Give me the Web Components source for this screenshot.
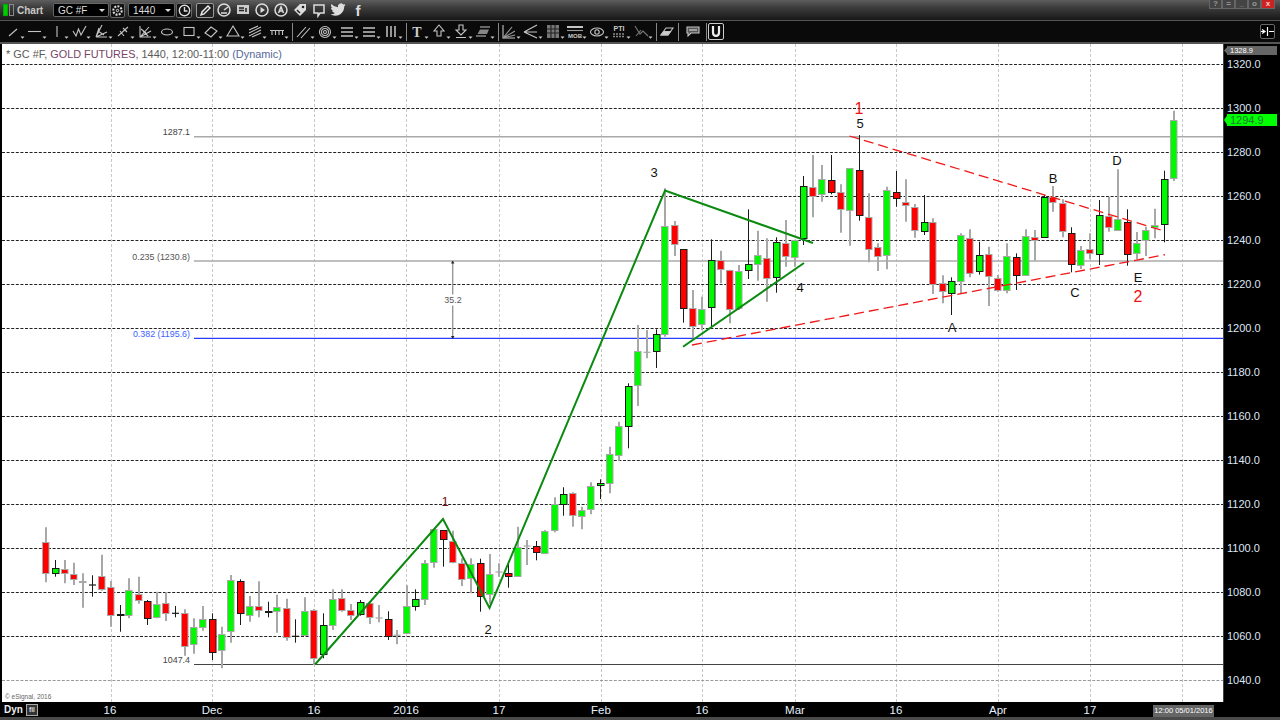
<!DOCTYPE html>
<html>
<head>
<meta charset="utf-8">
<title>Chart</title>
<style>
  html, body { margin: 0; background: #000; overflow: hidden; }
</style>
</head>
<body>
<chart-window></chart-window>
<script>
(function () {
  var SANS = '"Liberation Sans", Arial, sans-serif';

  // --- toolbar glyphs, drawn in a 22x20 box with the icon centred on x=9
  var TOOLS = {
    line: '<path d="M5 14L13 7"/>',
    hline: '<path d="M2 9.5H15"/>',
    vline: '<path d="M9 4V15"/>',
    wave: '<path d="M3 9L6 14L8.5 7L11 13L16 4"/>',
    fib: '<path d="M4 15L10 3M4 15L15 10M4 15H15M4 15L7 6M6 9L12 13"/>',
    cross: '<path d="M4 14L14 5M6 9L10 14M9 6L13 10"/>',
    fan: '<path d="M4 4V15H15M4 15L13 5M4 15L15 9M7 9L12 14M5 7L10 11"/>',
    ellipse: '<ellipse cx="9" cy="10" rx="5.5" ry="3"/>',
    rect: '<rect x="4" y="5.5" width="10" height="8"/>',
    diamond: '<path d="M3 11L9 5L15 9L9 15Z"/>',
    tri: '<path d="M9 4L15 14H3Z"/>',
    channel: '<path d="M3 11L15 5M3 14L15 8M3 8L12 4M6 15L15 11"/>',
    ticks: '<path d="M2 8.5H16M4 8V13M7.5 8V13M11 8V13M14.5 8V13"/>',
    parallel: '<path d="M3 15L12 5M7 16L16 6"/>',
    rings: '<circle cx="9" cy="10" r="5.5"/><circle cx="9" cy="10" r="3.5"/><circle cx="9" cy="10" r="1.5"/>',
    lines: '<path d="M3 6H15M3 10H15M3 14H15" stroke-width="1.5"/>',
    vlines: '<path d="M5 4V15M9 4V15M13 4V15" stroke-width="1.5"/>',
    text: '<text x="9" y="15" text-anchor="middle" font-size="14" font-weight="bold" font-family="Liberation Serif" fill="#ccc" stroke="none">T</text>',
    up: '<path d="M9 3L14 9H11V14H7V9H4Z"/>',
    down: '<path d="M7 3H11V8H14L9 13L4 8H7ZM4 15.5H14"/>',
    skew: '<path d="M6 5H16M2 14H12"/><path d="M6 7.5H15L13 12H3.5Z" fill="#888" stroke="none"/>',
    fanfill: '<path d="M3 3V16H15"/><path d="M3 16L12 5M3 16L15 9M3 16L15 13" stroke="#999"/>',
    arrows: '<path d="M2 10L15 3M2 10H15M2 10L15 16" stroke-width="1.2"/>',
    grid: '<rect x="3" y="3" width="12" height="13" fill="#777" stroke="none"/><path d="M7 3V16M11 3V16M3 7H15M3 11H15" stroke="#222"/>',
    mob: '<path d="M1 5H17" stroke-width="2"/><path d="M1 8.5H17" stroke="#999"/><text x="9" y="15.5" text-anchor="middle" font-size="6" font-weight="bold" font-family="Liberation Sans" fill="#ccc" stroke="none">MOB</text>',
    eye: '<ellipse cx="9" cy="10" rx="6.5" ry="4"/><circle cx="9" cy="10" r="2.2"/>',
    pti: '<text x="9" y="9" text-anchor="middle" font-size="7" font-weight="bold" font-family="Liberation Sans" fill="#ccc" stroke="none">PTI</text><path d="M3 12H15M3 14.5H15" stroke="#888" stroke-dasharray="2 1" stroke-width="1.5"/>',
    zig: '<path d="M3 4L8 12L11 9L16 14M4 14L9 8" stroke="#777"/>',
    eraser: '<path d="M3 13L8 6H15L10 13Z"/><path d="M3 13L5.5 9.5H12.5L10 13Z" fill="#ccc"/>',
    note: '<path d="M3 5H15V11H7L4 14V11H3Z" fill="#555"/><path d="M5 8H13" stroke="#ddd"/>'
  };

  // a toolbar button: icon, plus the little drop-down caret unless "plain"
  class ToolIcon extends HTMLElement {
    connectedCallback() {
      var plain = this.hasAttribute('plain');
      var w = plain ? 18 : 22;
      this.attachShadow({ mode: 'open' }).innerHTML =
        '<style>:host{display:block;width:' + w + 'px;height:20px}svg{display:block}</style>' +
        '<svg width="' + w + '" height="20" viewBox="0 0 ' + w + ' 20" fill="none" stroke="#c4c4c4" stroke-width="1.1">' +
        TOOLS[this.getAttribute('name')] +
        (plain ? '' : '<path d="M16.5 14.5h4l-2 2.2z" fill="#ccc" stroke="none"/>') +
        '</svg>';
    }
  }

  class DrawToolbar extends HTMLElement {
    connectedCallback() {
      var groups = [
        ['line', 'hline', 'vline', 'wave', 'fib', 'cross', 'fan', 'ellipse', 'rect', 'diamond', 'tri', 'channel', 'ticks'],
        ['parallel', 'rings', 'lines', 'lines', 'vlines'],
        ['text', 'up', 'down', 'skew'],
        ['fanfill', 'arrows', 'grid', 'mob', 'eye', 'pti', 'zig']
      ];
      var html = groups.map(function (g) {
        return g.map(function (n) { return '<tool-icon name="' + n + '"></tool-icon>'; }).join('') + '<i class="sep"></i>';
      }).join('');
      this.attachShadow({ mode: 'open' }).innerHTML =
        '<style>' +
        ':host{display:flex;align-items:center;height:21px;padding-left:4px;background:#0a0a0a;border-top:1px solid #555;border-bottom:2px solid #555}' +
        '.sep{display:block;width:1px;height:18px;background:#888;margin:0 1px 0 2px}' +
        '.magnet{width:14px;height:15px;border:1px solid #ccc;border-radius:2px;display:flex;align-items:center;justify-content:center}' +
        '.end{margin-left:auto;margin-right:5px;width:13px;height:13px;border:1px solid #666;border-radius:2px;background:#000;display:flex;align-items:center;justify-content:center}' +
        '</style>' + html +
        '<tool-icon name="eraser" plain></tool-icon><i class="sep"></i>' +
        '<tool-icon name="note" plain style="margin:0 2px 0 4px"></tool-icon><i class="sep" style="margin-right:1px"></i>' +
        '<div class="magnet"><svg width="12" height="13" viewBox="0 0 12 13" fill="none" stroke="#eee" stroke-width="2.2"><path d="M3 1V7.5C3 12 9 12 9 7.5V1"/></svg></div>' +
        '<div class="end"><svg width="13" height="9" viewBox="0 0 13 9" fill="none" stroke="#fff" stroke-width="1.2"><path d="M0 4.5H4M1 2.5L4 4.5L1 6.5M6.5 0V9M8 4.5H13"/></svg></div>';
    }
  }

  // small round / square icons of the top strip
  var TOP_ICONS = [
    '<circle cx="8" cy="8" r="6"/><path d="M8 8L12 5M5 11H11"/>',
    '<rect x="2" y="3" width="12" height="9" fill="#ccc" stroke="none"/><path d="M4 6H9M4 8.5H9M11 6V10" stroke="#222"/>',
    '<circle cx="8" cy="8" r="6"/><path d="M6.5 5L11 8L6.5 11Z" fill="#ddd" stroke="none"/>',
    '<circle cx="8" cy="8" r="6"/><path d="M5.5 11L8 5L10.5 11M6.5 9H9.5"/>',
    '<path d="M2 8L8 2H14V8L8 14Z" fill="#ddd" stroke="none"/><circle cx="11" cy="5" r="1.3" fill="#222" stroke="none"/><path d="M5 8L8 11" stroke="#222"/>',
    '<path d="M3 3H13V11H9L7 14V11H3Z"/>',
    '<path transform="scale(.68) translate(0 -.4)" fill="#ddd" stroke="none" d="M23 4.6c-.8.4-1.7.6-2.6.7.9-.6 1.6-1.4 2-2.5-.9.5-1.9.9-2.9 1.1A4.6 4.6 0 0 0 11.6 8 13 13 0 0 1 2.2 3.2a4.6 4.6 0 0 0 1.4 6.1c-.7 0-1.4-.2-2.1-.6 0 2.2 1.6 4.1 3.7 4.6-.7.2-1.4.2-2.1.1.6 1.9 2.3 3.2 4.3 3.2A9.3 9.3 0 0 1 .6 18.5 13 13 0 0 0 7.7 20.6c8.5 0 13.2-7.1 13.2-13.2v-.6c.9-.7 1.7-1.5 2.1-2.2z"/>'
  ];

  class TitleBar extends HTMLElement {
    connectedCallback() {
      var icons = TOP_ICONS.map(function (p) {
        return '<svg class="ic" width="16" height="16" viewBox="0 0 16 16" fill="none" stroke="#ddd" stroke-width="1.5">' + p + '</svg>';
      }).join('');
      this.attachShadow({ mode: 'open' }).innerHTML =
        '<style>' +
        ':host{display:flex;align-items:center;height:20px;box-sizing:border-box;padding-left:4px;font:bold 10px ' + SANS + ';color:#c8c8c8;background:linear-gradient(#5e5e5e 0,#3e3e3e 35%,#181818 100%)}' +
        '.logo{display:flex;gap:2px;width:10px;margin-right:3px}.logo i{display:block;width:3px;height:10px;border:1px solid #888;margin-left:-1px}.logo i:first-child{background:#0c0;border-color:#0a0}' +
        '.name{width:36px}' +
        '.box{height:14px;background:#000;border:1px solid #666;border-radius:2px;display:flex;align-items:center;justify-content:space-between;padding:0 3px 0 4px;box-sizing:border-box;font-weight:normal;color:#ddd}' +
        '.box::after{content:"";border:3px solid transparent;border-top:3px solid #ddd;margin-top:3px}' +
        '.btn{width:15px;height:15px;border:1px solid #666;border-radius:2px;background:#111;box-sizing:border-box;display:flex;align-items:center;justify-content:center;margin-left:1px}' +
        '.ic{display:block;margin:0 1.5px}.row{display:flex;align-items:center}' +
        '.f{font:bold 15px ' + SANS + ';color:#ddd;width:16px;text-align:center;margin-left:3px}' +
        '.win{margin-left:auto;display:flex;align-self:flex-start;margin-right:5px}.win span{display:block;width:13px;height:9px;border:1px solid #666;border-top:0;box-sizing:border-box;font:bold 8px/8px ' + SANS + ';text-align:center;color:#999;background:#444}.win .x{background:#c22;color:#fcc;width:14px}' +
        '</style>' +
        '<div class="logo"><i></i><i></i></div><div class="name">Chart</div>' +
        '<div class="box" style="width:56px">GC #F</div>' +
        '<div class="btn"><svg width="13" height="13" viewBox="0 0 13 13" fill="none" stroke="#ddd" stroke-width="2"><circle cx="6.5" cy="6.5" r="4.2" stroke-dasharray="2 1.2"/><circle cx="6.5" cy="6.5" r="1.2" stroke-width="1"/></svg></div>' +
        '<div class="box" style="width:47px;margin-left:3px">1440</div>' +
        '<div class="btn" style="width:16px"><svg width="13" height="13" viewBox="0 0 13 13" fill="none" stroke="#ddd" stroke-width="1.4"><circle cx="6.5" cy="6.5" r="5.2"/><path d="M6.5 3V7H9.5"/></svg></div>' +
        '<div class="btn" style="width:18px;margin-left:4px;border-color:#999;background:#222"><svg width="13" height="13" viewBox="0 0 13 13" fill="none" stroke="#eee" stroke-width="1.4"><path d="M2 11L3 8L9 2L11 4L5 10Z"/></svg></div>' +
        '<div class="row">' + icons + '<div class="f">f</div></div>' +
        '<div class="win"><span>?</span><span>=</span><span>_</span><span>o</span><span class="x">x</span></div>';
    }
  }

  class PriceAxis extends HTMLElement {
    connectedCallback() {
      var rows = '';
      for (var p = 1320; p >= 1040; p -= 20) rows += '<div class="row">' + p.toFixed(1) + '</div>';
      this.attachShadow({ mode: 'open' }).innerHTML =
        '<style>' +
        ':host{display:block;position:relative;width:57px;background:#000;padding-top:12px;box-sizing:border-box;font:11px ' + SANS + ';color:#dde6f6;overflow:hidden;border-left:1px solid #444}' +
        '.row{height:44px;line-height:17px;padding-left:3px}' +
        '.flag{position:absolute;left:3px;width:50px;display:flex;align-items:center;padding-left:3px;box-sizing:border-box}' +
        '.flag::before{content:"";position:absolute;left:-3px;top:0;bottom:0;width:4px;clip-path:polygon(100% 0,0 50%,100% 100%)}' +
        '.top{top:2px;height:9px;background:#666;font-size:7.5px;color:#fff}.top::before{background:#666}' +
        '.last{top:70px;height:12px;background:#00ff00;color:#1c7a34;font-size:11px}.last::before{background:#00ff00}' +
        '</style>' + rows +
        '<div class="flag top">1328.9</div><div class="flag last">1294.9</div>';
    }
  }

  class TimeAxis extends HTMLElement {
    connectedCallback() {
      var labels = [[110, '16'], [212, 'Dec'], [314, '16'], [406, '2016'], [499, '17'], [601, 'Feb'], [702, '16'], [795, 'Mar'], [896, '16'], [998, 'Apr'], [1090, '17']];
      var html = labels.map(function (l) { return '<span class="t" style="left:' + l[0] + 'px">' + l[1] + '</span>'; }).join('');
      this.attachShadow({ mode: 'open' }).innerHTML =
        '<style>' +
        ':host{display:flex;align-items:center;position:relative;height:15px;background:#000;border-bottom:3px solid #4a4a4a;font:11.5px ' + SANS + ';color:#e6f0fc;padding-left:4px}' +
        '.t{position:absolute;top:1px;transform:translateX(-50%);line-height:14px}' +
        '.dyn{font:bold 10px ' + SANS + ';color:#eee}' +
        '.mode{margin-left:3px;width:10px;height:10px;border:1px solid #aaa;background:#333;font:8px/10px ' + SANS + ';text-align:center;color:#fff}' +
        '.stamp{position:absolute;left:1153px;top:3px;width:61px;height:12px;background:#666;color:#fff;font-size:7.5px;line-height:12px;text-align:center;white-space:nowrap}' +
        '</style><span class="dyn">Dyn</span><span class="mode">fil</span>' + html +
        '<span class="stamp">12:00 05/01/2016</span>';
    }
  }

  // candles as [high, top, bottom, low, colour], read off the reference in
  // 3x crop units: y = base + v / 3
  var SECTIONS = [
    [500, [[82,125,218,247,'r'],[180,203,217,230,'g'],[180,207,219,250,'r'],[188,223,239,255,'r'],[220,243,247,323,'r'],[226,255,257,290,'k'],[164,227,267,272,'r'],[243,262,347,380,'r'],[315,343,347,395,'r'],[235,271,347,355,'g'],[230,281,299,311,'r'],[300,303,354,375,'r'],[275,313,353,355,'g'],[277,310,340,363,'r'],[318,340,342,352,'k'],[328,339,437,467,'r'],[355,381,433,461,'g'],[318,356,379,392,'g'],[340,358,456,480,'r'],[380,403,450,505,'g'],[225,241,394,428,'g'],[238,243,339,375,'r'],[288,317,344,365,'g'],[244,317,328,352,'r'],[305,333,337,352,'r'],[284,320,332,398,'g'],[296,325,411,422,'r'],[358,409,410,428,'k'],[292,334,407,408,'g'],[327,331,474,495,'r']]],
    [480, [[400,436,524,535,'g'],[328,356,435,450,'g'],[328,353,390,395,'r'],[372,391,405,420,'r'],[360,367,404,407,'g'],[365,370,412,432,'r'],[375,414,416,427,'k'],[394,417,467,480,'r'],[450,466,468,493,'k'],[316,379,459,462,'g'],[328,358,379,392,'g'],[240,250,358,375,'g'],[148,148,246,263,'g'],[150,150,176,260,'r'],[152,184,246,250,'r'],[235,248,296,318,'r'],[235,251,292,340,'g'],[236,249,348,395,'r'],[222,283,342,372,'g'],[250,276,278,290,'k'],[245,279,288,323,'r'],[140,201,289,290,'g'],[180,198,199,255,'k'],[183,198,216,241,'r'],[150,153,219,220,'g'],[52,73,150,157,'g'],[22,43,72,107,'g'],[37,39,106,140,'r'],[80,89,108,148,'g'],[7,18,87,103,'g']]],
    [340, [[418,430,436,477,'g'],[320,343,430,460,'g'],[245,257,344,362,'g'],[130,137,257,325,'g']]],
    [160, [[495,574,675,738,'g'],[510,577,579,595,'k'],[508,522,572,624,'g'],[85,197,522,530,'g'],[183,195,251,288,'r'],[267,267,443,488,'r'],[390,445,498,535,'r'],[410,447,493,510,'g'],[238,301,443,498,'g'],[272,301,328,370,'r'],[329,329,445,490,'r'],[315,334,445,450,'g'],[148,313,332,357,'g'],[212,285,312,362,'g'],[235,294,354,425,'r'],[232,247,353,398,'g'],[180,249,289,320,'r'],[239,239,290,320,'g'],[48,79,234,255,'g'],[-15,81,107,172,'r'],[15,57,103,125,'g'],[-15,59,94,103,'r']]],
    [90, [[283,307,358,428,'r'],[235,235,360,467,'g'],[135,241,376,392,'r'],[310,381,477,517,'r'],[460,472,499,543,'r'],[290,300,496,538,'g'],[243,307,326,350,'r'],[268,335,345,395,'r'],[342,352,422,443,'r'],[315,395,422,435,'g'],[385,397,582,612,'r'],[556,580,605,640,'r'],[562,574,609,675,'g'],[430,436,573,610,'g'],[418,443,549,562,'r'],[455,496,545,554,'g'],[470,491,558,648,'r'],[555,565,602,605,'r'],[460,499,600,610,'g'],[490,502,556,600,'r']]],
    [100, [[388,409,526,527,'g'],[390,412,420,483,'r'],[285,290,409,410,'g'],[258,290,304,335,'r'],[298,308,392,412,'r'],[382,398,490,517,'r'],[438,451,497,507,'g'],[400,448,460,478,'r'],[300,345,461,495,'g'],[290,349,383,395,'r'],[208,358,390,392,'g'],[328,367,462,497,'r'],[396,428,457,478,'g'],[380,390,420,468,'g'],[326,375,382,415,'g'],[212,237,373,427,'g'],[32,61,234,243,'g']]]
  ];
  // bars that landed on a whole pixel after the screenshot was scaled: crisp and dark
  var CRISP = [1,5,8,11,14,18,21,24,27,30,34,37,40,43,47,50,53,56,60,63,66,69,72,76,79,82,85,88,92,95,98,101,105,108,111,114,117,121];

  function candles() {
    var out = '', i = 0;
    SECTIONS.forEach(function (s) {
      s[1].forEach(function (c) {
        var x = 46.3 + 9.24 * i, crisp = CRISP.indexOf(i) >= 0;
        var hi = s[0] + c[0] / 3, top = s[0] + c[1] / 3, bot = s[0] + c[2] / 3, lo = s[0] + c[3] / 3;
        var cx = crisp ? Math.floor(x) + .5 : Math.round(x);
        var edge = crisp ? '#1a1a1a' : '#a8a8a8';
        out += '<path d="M' + cx + ' ' + hi.toFixed(1) + 'V' + lo.toFixed(1) + '" stroke="' + edge + '" stroke-width="' + (crisp ? 1 : 2) + '"/>';
        if (c[4] === 'k') {
          out += '<path d="M' + (cx - 3.5) + ' ' + top.toFixed(1) + 'h7" stroke="' + edge + '" stroke-width="1.2"/>';
        } else {
          var ry = Math.round(top) + .5, rh = Math.max(1, Math.round(bot - top));
          var l = crisp ? cx - 3 : cx - 3.5;
          out += '<rect x="' + l + '" y="' + ry + '" width="6.5" height="' + rh + '" fill="' + (c[4] === 'r' ? '#ff0000' : '#00f800') + '" stroke="' + edge + '" stroke-width="1"/>';
        }
        i++;
      });
    });
    return out;
  }

  function grid() {
    var out = '', k;
    [111, 212, 314, 406, 499, 601, 702, 795, 896, 998, 1090, 1182].forEach(function (x) {
      out += '<path d="M' + (x + .5) + ' 44V702" stroke="#c8c8c8" stroke-dasharray="3 2"/>';
    });
    for (k = 0; k < 15; k++) {
      var y = 64.5 + 44 * k;
      out += '<path d="M2 ' + y + 'H1224" stroke="' + (k === 14 ? '#999' : '#222') + '" stroke-dasharray="3 1.6"/>';
    }
    return out;
  }

  // annotations: [x centre, y centre, text, font size, colour]
  var MARKS = [
    [445, 501, '1', 13, '#701020'], [488, 629, '2', 13, '#111'], [654, 172, '3', 13, '#111'], [800, 287, '4', 13, '#111'],
    [859, 109, '1', 16, '#ee1111'], [860, 123, '5', 13, '#111'], [952, 327, 'A', 13, '#111'], [1053, 178, 'B', 13, '#111'],
    [1075, 292, 'C', 13, '#111'], [1117, 160, 'D', 13, '#111'], [1138, 277, 'E', 13, '#111'], [1138, 297, '2', 16, '#ee1111']
  ];
  // level captions, right edge at x=190
  var LEVELS = [[132, '1287.1', '#444'], [256.5, '0.235 (1230.8)', '#555'], [334, '0.382 (1195.6)', '#3a62ff'], [659.5, '1047.4', '#444']];

  class ChartPane extends HTMLElement {
    connectedCallback() {
      var marks = MARKS.map(function (m) {
        return '<span class="mark" style="left:' + (m[0] - 2) + 'px;top:' + (m[1] - 44) + 'px;font-size:' + m[3] + 'px;color:' + m[4] + '">' + m[2] + '</span>';
      }).join('');
      var levels = LEVELS.map(function (l) {
        return '<span class="level" style="top:' + (l[0] - 44) + 'px;color:' + l[2] + '">' + l[1] + '</span>';
      }).join('');
      this.attachShadow({ mode: 'open' }).innerHTML =
        '<style>' +
        ':host{display:block;position:relative;flex:1;background:#fff;overflow:hidden;font-family:' + SANS + '}' +
        'svg{position:absolute;left:0;top:0}' +
        '.head{position:absolute;left:4px;top:3px;font-size:10.9px;line-height:14px;color:#5a5a5a;white-space:nowrap}' +
        '.head b{font-weight:normal;color:#7a4468}.head em{font-style:normal;color:#55689a}' +
        '.mark{position:absolute;transform:translate(-50%,-50%);line-height:1}' +
        '.level{position:absolute;right:1033px;transform:translateY(-50%);font-size:8.9px;line-height:1;white-space:nowrap}' +
        '.span{position:absolute;left:451px;top:256px;transform:translate(-50%,-50%);font-size:8.9px;line-height:11px;background:#fff;color:#555}' +
        '.copy{position:absolute;left:3px;top:649px;font-size:6.5px;line-height:8px;color:#666}' +
        '</style>' +
        '<svg width="1222" height="658" viewBox="2 44 1222 658" fill="none">' +
        grid() +
        '<path d="M194 136.8H1224M194 261H1224" stroke="#aaa" stroke-width="1.6"/>' +
        '<path d="M194 338.4H1224" stroke="#2a3cff" stroke-width="1.4"/>' +
        '<path d="M194 664.5H1224" stroke="#444"/>' +
        '<path d="M452.7 262V338" stroke="#999" stroke-width="1.4"/><path d="M451 263.5l1.7-3 1.7 3zM451 336l1.7 3 1.7-3z" fill="#222"/>' +
        candles() +
        '<g stroke="#0b8a10" stroke-width="2" stroke-linejoin="miter">' +
        '<path d="M315 664.5L443 519L489.5 608L665 190.5L813 243"/><path d="M683 346.7L804 263"/></g>' +
        '<g stroke="#f01818" stroke-width="1.3" stroke-dasharray="10 5">' +
        '<path d="M849.5 136L1160.7 230"/><path d="M692 345L1165 254.7"/></g>' +
        '</svg>' +
        '<div class="head">* GC #F, <b>GOLD FUTURES</b>, 1440, 12:00-11:00 <em>(Dynamic)</em></div>' +
        marks + levels +
        '<span class="span">35.2</span><span class="copy">© eSignal, 2016</span>';
    }
  }

  class ChartWindow extends HTMLElement {
    connectedCallback() {
      this.attachShadow({ mode: 'open' }).innerHTML =
        '<style>' +
        ':host{display:flex;flex-direction:column;width:1280px;height:720px;background:#000}' +
        '.main{display:flex;flex:1;min-height:0;padding-left:2px}' +
        '</style>' +
        '<title-bar></title-bar><draw-toolbar></draw-toolbar>' +
        '<div class="main"><chart-pane></chart-pane><price-axis></price-axis></div>' +
        '<time-axis></time-axis>';
    }
  }

  customElements.define('tool-icon', ToolIcon);
  customElements.define('draw-toolbar', DrawToolbar);
  customElements.define('title-bar', TitleBar);
  customElements.define('price-axis', PriceAxis);
  customElements.define('time-axis', TimeAxis);
  customElements.define('chart-pane', ChartPane);
  customElements.define('chart-window', ChartWindow);
})();
</script>
</body>
</html>
